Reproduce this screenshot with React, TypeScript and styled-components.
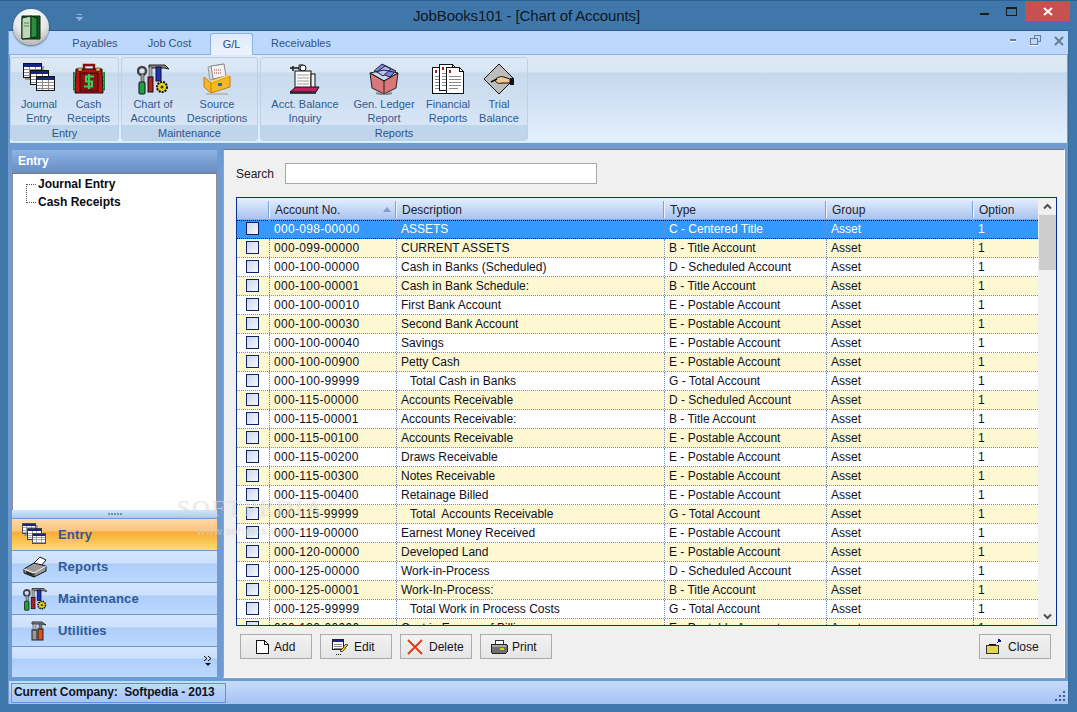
import React from "react";
import styled, { createGlobalStyle } from "styled-components";

const Global = createGlobalStyle`
  html, body { margin: 0; padding: 0; width: 1077px; height: 712px; overflow: hidden; background: #3f76a9; }
  * { box-sizing: border-box; }
  #root { width: 1077px; height: 712px; }
`;

const Win = styled.div`
  position: relative;
  width: 1077px;
  height: 712px;
  background: #3f77ab;
  border-top: 1px solid #2f5f8e;
  font-family: "Liberation Sans", Arial, sans-serif;
  font-size: 12px;
  color: #101018;
  overflow: hidden;
  display: flex;
  flex-direction: column;
  padding: 0 8px 8px 8px;
`;
const TitleBar = styled.div`
  height: 29px;
  position: relative;
  flex: none;
  display: flex;
  align-items: center;
  justify-content: center;
  padding-right: 24px;
`;
const TitleText = styled.div`
  font-size: 15px;
  letter-spacing: -0.12px;
  color: #0f1722;
  margin-top: -1px;
`;
const Orb = styled.div`
  position: absolute;
  left: 13px;
  top: 8px;
  width: 36px;
  height: 36px;
  border-radius: 50%;
  background: radial-gradient(circle at 50% 25%, #fdfdfd 0%, #e8e8e8 50%, #9a9a9a 100%);
  box-shadow: 0 1px 2px rgba(0, 0, 0, 0.55);
  z-index: 3;
  display: flex;
  align-items: center;
  justify-content: center;
`;
const QuickArrow = styled.div`
  position: absolute;
  left: 68px;
  top: 13px;
  width: 7px;
  height: 8px;
  display: flex;
  align-items: flex-end;
  justify-content: center;
`;
const Caption = styled.div`
  position: absolute;
  right: -7px;
  top: 0;
  height: 20px;
  display: flex;
  align-items: flex-start;
`;
const CapBtn = styled.div<{ $close?: boolean }>`
  width: ${(p) => (p.$close ? "45px" : "27px")};
  height: 20px;
  margin-right: ${(p) => (p.$close ? "6px" : "0")};
  background: ${(p) => (p.$close ? "#c75050" : "transparent")};
  display: flex;
  align-items: center;
  justify-content: center;
`;
const Client = styled.div`
  flex: 1;
  min-height: 0;
  display: flex;
  flex-direction: column;
  background: #6f9ad2;
  border-top: 1px solid #2f5f8e;
  border-left: 1px solid #6d9ad0;
  border-right: 1px solid #3c6ea0;
`;
const TabRow = styled.div`
  height: 24px;
  flex: none;
  position: relative;
  background: #bcd8fd;
  display: flex;
  align-items: flex-end;
  padding-left: 45px;
  border-bottom: 1px solid #8cb2e4;
`;
const Tab = styled.div<{ $active?: boolean; $w: number }>`
  width: ${(p) => p.$w}px;
  height: 22px;
  margin-bottom: -1px;
  text-align: center;
  line-height: 21px;
  font-size: 11px;
  color: #33527c;
  position: relative;
  ${(p) =>
    p.$active
      ? `margin-left: 7px; background: linear-gradient(#dfeafc, #eef3fb); border: 1px solid #8cb2e4; border-bottom: none; border-radius: 3px 3px 0 0; color:#2a4a78;`
      : ""}
`;
const MdiButtons = styled.div`
  position: absolute;
  right: 4px;
  top: 4px;
  display: flex;
  gap: 13px;
  align-items: center;
`;
const Ribbon = styled.div`
  height: 88px;
  flex: none;
  background: linear-gradient(#dfe9f5 0, #d9e6f3 17px, #c6d8ee 18px, #e4f0ff 100%);
  border-bottom: 1px solid #c5f0fb;
  padding: 2px 0 0 0;
  margin: 0 1px 0 1px;
  display: flex;
  gap: 2px;
  align-items: flex-start;
`;
const Group = styled.div<{ $w: number }>`
  width: ${(p) => p.$w}px;
  height: 84px;
  flex: none;
  border: 1px solid #bcd1e8;
  border-radius: 3px;
  display: flex;
  flex-direction: column;
  background: linear-gradient(#dde9f5 0, #d8e5f3 14px, #c8daee 15px, #dbe8f8 100%);
`;
const GroupItems = styled.div`
  flex: 1;
  display: flex;
`;
const GroupLabel = styled.div`
  height: 15px;
  background: #bed5ec;
  color: #2f5486;
  font-size: 11px;
  line-height: 16px;
  text-align: center;
  border-radius: 0 0 3px 3px;
`;
const RibbonBtn = styled.div<{ $w: number }>`
  width: ${(p) => p.$w}px;
  flex: none;
  display: flex;
  flex-direction: column;
  align-items: center;
  padding-top: 5px;
`;
const RibbonIcon = styled.div`
  height: 32px;
  display: flex;
  align-items: flex-start;
  justify-content: center;
`;
const RibbonText = styled.div`
  font-size: 11px;
  line-height: 14px;
  color: #2f5a91;
  text-align: center;
  white-space: pre;
  margin-top: 2px;
`;
const Band = styled.div`
  height: 6px;
  flex: none;
  background: #6f9ad2;
`;
const Body = styled.div`
  flex: 1;
  min-height: 0;
  display: flex;
  background: #6f9ad2;
  padding: 0 3px 3px 2px;
  gap: 5px;
`;
const Side = styled.div`
  width: 207px;
  flex: none;
  display: flex;
  flex-direction: column;
  border: 1px solid #6f9ad2;
`;
const SideHeader = styled.div`
  height: 24px;
  flex: none;
  background: linear-gradient(#8fb4e6, #7197cb 70%, #6a8fc0);
  color: #fff;
  font-weight: bold;
  font-size: 12px;
  line-height: 23px;
  padding-left: 6px;
  border-bottom: 1px solid #777;
`;
const Tree = styled.div`
  flex: 1;
  min-height: 0;
  background: #fff;
  border-left: 1px solid #909090;
  border-right: 1px solid #909090;
  padding: 3px 0 0 25px;
  position: relative;
`;
const TreeLine = styled.div`
  position: absolute;
  left: 13px;
  top: 10px;
  width: 10px;
  height: 19px;
  border-left: 1px dotted #555;
  border-bottom: 1px dotted #555;
  border-top: 1px dotted #555;
`;
const TreeItem = styled.div`
  height: 18px;
  line-height: 15px;
  font-weight: bold;
  font-size: 12px;
  color: #0a0a14;
`;
const Splitter = styled.div`
  height: 9px;
  flex: none;
  background: linear-gradient(#d3e5fd, #a9c9f5);
  border-bottom: 1px solid #6f9ad2;
  display: flex;
  align-items: center;
  justify-content: center;
  gap: 1px;
`;
const Grip = styled.span`
  width: 2px;
  height: 2px;
  background: #6f8fbc;
`;
const NavItem = styled.div<{ $active?: boolean }>`
  height: 32px;
  flex: none;
  display: flex;
  align-items: center;
  border-bottom: 1px solid #6a95cd;
  background: ${(p) =>
    p.$active
      ? "linear-gradient(#fed9a4 0, #fcc47e 12px, #f9ac36 13px, #fedc72 100%)"
      : "linear-gradient(#d6e7fe 0, #cbe0fd 12px, #aecefa 13px, #bcd8fd 100%)"};
`;
const NavIcon = styled.div`
  width: 35px;
  flex: none;
  display: flex;
  justify-content: flex-end;
`;
const NavLabel = styled.div`
  font-weight: bold;
  font-size: 13px;
  letter-spacing: 0.2px;
  color: #2f5a96;
  margin-left: 11px;
  margin-top: -1px;
`;
const NavFooter = styled.div`
  height: 30px;
  flex: none;
  display: flex;
  align-items: flex-start;
  justify-content: flex-end;
  padding: 8px 5px 0 0;
  background: linear-gradient(#d6e7fe 0, #cbe0fd 11px, #aecefa 12px, #bcd8fd 100%);
`;
const Main = styled.div`
  flex: 1;
  min-width: 0;
  background: #f0f0f0;
  border-top: 1px solid #777;
  border-left: 1px solid #a0a0a0;
  border-right: 1px solid #fff;
  border-bottom: 1px solid #fff;
  padding: 12px 7px 0 12px;
  display: flex;
  flex-direction: column;
`;
const SearchRow = styled.div`
  height: 22px;
  flex: none;
  display: flex;
  align-items: center;
  margin-bottom: 13px;
`;
const SearchLabel = styled.div`
  width: 49px;
  color: #1a1a24;
  padding-top: 2px;
`;
const SearchBox = styled.div`
  width: 312px;
  height: 21px;
  background: #fff;
  border: 1px solid #a8a8a8;
`;
const TableBox = styled.div`
  height: 429px;
  flex: none;
  border: 1px solid #0a2f8a;
  display: flex;
  background: #fff;
  overflow: hidden;
`;
const TableInner = styled.div`
  flex: 1;
  min-width: 0;
  overflow: hidden;
`;
const cols = "32px 127px 268px 162px 147px 1fr";
const HeadRow = styled.div`
  height: 22px;
  display: grid;
  grid-template-columns: ${cols};
  background: linear-gradient(#e6effe, #a9c4ef);
  border-bottom: 1px solid #8ea9d8;
  align-items: center;
`;
const HeadCell = styled.div<{ $first?: boolean }>`
  height: 17px;
  line-height: 19px;
  padding-left: 5px;
  position: relative;
  color: #1c2230;
  border-left: ${(p) => (p.$first ? "none" : "1px solid #eef4ff")};
  box-shadow: ${(p) => (p.$first ? "none" : "-1px 0 0 #7f9fd2")};
  margin-top: 2px;
`;
const SortMark = styled.span`
  position: absolute;
  right: 5px;
  top: 6px;
  width: 0;
  height: 0;
  border-left: 4px solid transparent;
  border-right: 4px solid transparent;
  border-bottom: 5px solid #7f9ccc;
`;
const Row = styled.div<{ $sel?: boolean; $alt?: boolean }>`
  height: 19px;
  display: grid;
  grid-template-columns: ${cols};
  color: ${(p) => (p.$sel ? "#fff" : "#10101c")};
  background: ${(p) => (p.$sel ? "#3399ff" : p.$alt ? "#fdf8d2" : "#fff")};
  border-bottom: ${(p) => (p.$sel ? "1px dotted #000" : "1px dotted #6f8cc8")};
  ${(p) => (p.$sel ? "border-top: 1px dotted #000; & > div { margin-top: -1px; }" : "")}
`;
const Cell = styled.div<{ $indent?: boolean; $num?: boolean }>`
  line-height: 19px;
  padding-left: ${(p) => (p.$indent ? "13px" : "4px")};
  border-left: 1px dotted #6f8cc8;
  white-space: pre;
  overflow: hidden;
  letter-spacing: ${(p) => (p.$num ? "0.32px" : "0")};
`;
const CheckCell = styled.div`
  display: flex;
  align-items: flex-start;
  justify-content: flex-start;
  padding: 2px 0 0 9px;
`;
const Check = styled.div`
  width: 13px;
  height: 13px;
  border: 1px solid #0c2461;
  background: linear-gradient(135deg, #cdd6ee, #f7f8fc);
`;
const Scroll = styled.div`
  width: 18px;
  flex: none;
  background: #f0f0f0;
  display: flex;
  flex-direction: column;
  border-left: 1px solid #f0f0f0;
`;
const ScrollBtn = styled.div`
  height: 17px;
  flex: none;
  display: flex;
  align-items: center;
  justify-content: center;
`;
const Thumb = styled.div`
  height: 55px;
  flex: none;
  background: #cdcdcd;
`;
const ScrollTrack = styled.div`
  flex: 1;
`;
const Buttons = styled.div`
  flex: 1;
  display: flex;
  gap: 8px;
  padding: 8px 6px 0 4px;
`;
const Btn = styled.div<{ $push?: boolean; $pad: number; $gap: number }>`
  width: 72px;
  height: 25px;
  border: 1px solid #ababab;
  background: linear-gradient(#f2f2f2, #e5e5e5);
  display: flex;
  align-items: center;
  padding-left: ${(p) => p.$pad}px;
  gap: ${(p) => p.$gap}px;
  color: #141420;
  ${(p) => (p.$push ? "margin-left: auto;" : "")}
`;
const Status = styled.div`
  height: 23px;
  flex: none;
  background: linear-gradient(#c6dcfc, #a4c3f2);
  display: flex;
  align-items: center;
  padding: 1px 0 0 2px;
  position: relative;
`;
const StatusPane = styled.div`
  width: 215px;
  height: 20px;
  border: 1px solid #4f97ee;
  font-weight: bold;
  font-size: 12px;
  letter-spacing: -0.1px;
  line-height: 17px;
  padding-left: 2px;
  color: #10141c;
  white-space: pre;
`;
const Grippy = styled.div`
  position: absolute;
  right: 2px;
  bottom: 2px;
  line-height: 0;
`;
const Watermark = styled.div`
  position: absolute;
  left: 177px;
  top: 494px;
  font-family: "Liberation Serif", serif;
  font-size: 24px;
  letter-spacing: 2px;
  color: rgba(255, 255, 255, 0.45);
  text-shadow: 0 0 1px rgba(140, 140, 140, 0.35);
  pointer-events: none;
  z-index: 4;
`;
const WatermarkSmall = styled.div`
  font-size: 11px;
  font-family: "Liberation Sans", sans-serif;
  letter-spacing: 0.5px;
  margin-left: 20px;
  margin-top: 3px;
  color: rgba(255, 255, 255, 0.4);
`;

const P = { shapeRendering: "crispEdges" as const };

const Sheet = ({ x, y }: { x: number; y: number }) => (
  <g transform={`translate(${x} ${y})`}>
    <rect x=".5" y=".5" width="18" height="14" fill="#fff" stroke="#111" />
    <rect x="1" y="1" width="17" height="3" fill="#1a2580" />
    <path d="M1 6.5h17M1 9.5h17M1 12.5h17M6.5 4v10M12.5 4v10" stroke="#8a8a8a" fill="none" />
  </g>
);
const JournalIcon = ({ s = 1 }: { s?: number }) => (
  <svg width={33 * s} height={32 * s} viewBox="0 0 33 32" {...P}>
    <rect x="2" y="3" width="19" height="14" fill="#999" />
    <Sheet x={0} y={0} />
    <Sheet x={7} y={7} />
    <Sheet x={13} y={13} />
  </svg>
);
const CashIcon = () => (
  <svg width="32" height="32" viewBox="0 0 32 32">
    <path d="M11 7V2h10v5" fill="none" stroke="#8a1010" strokeWidth="2.4" />
    <path d="M3 6h26l1 24H2z" fill="#b81212" stroke="#111" />
    <path d="M0 9l2 1-1 2 1 2-1 2 1 2-1 2 1 2-1 2 1 3H0zM32 9l-2 1 1 2-1 2 1 2-1 2 1 2-1 2 1 2-1 3h2z" fill="#1c9440" stroke="#062" strokeWidth=".6" />
    <rect x="5" y="5" width="4" height="3" fill="#e8c040" stroke="#111" strokeWidth=".5" />
    <rect x="23" y="5" width="4" height="3" fill="#e8c040" stroke="#111" strokeWidth=".5" />
    <rect x="7" y="10" width="18" height="18" fill="#8e1010" stroke="#3a0808" />
    <path d="M21 13.5h-8v5h6v5h-8M16 11v15" fill="none" stroke="#2fd060" strokeWidth="2.2" />
  </svg>
);
const ToolsIcon = ({ small }: { small?: boolean }) => (
  <svg width={small ? 24 : 32} height={small ? 24 : 32} viewBox="0 0 32 32">
    <circle cx="5" cy="8" r="4" fill="none" stroke="#444" strokeWidth="2.5" />
    <rect x="4" y="11" width="3" height="9" fill="#999" stroke="#222" strokeWidth=".5" />
    <rect x="2" y="19" width="6" height="12" rx="1" fill="#20a040" stroke="#111" />
    <path d="M12 2h16l4 4-5-1H12z" fill="#888" stroke="#222" />
    <rect x="12" y="4" width="3" height="10" fill="#aaa" stroke="#222" strokeWidth=".5" />
    <rect x="11" y="14" width="5" height="15" fill="#b02020" stroke="#111" />
    <rect x="19" y="4" width="5" height="14" fill="#2030c0" stroke="#111" />
    <circle cx="25" cy="24" r="5" fill="#e8d020" stroke="#111" strokeDasharray="2 1" strokeWidth="2" />
    <circle cx="25" cy="24" r="1.5" fill="#333" />
  </svg>
);
const SourceIcon = () => (
  <svg width="28" height="32" viewBox="0 0 28 32">
    <path d="M5 4l15-3 2 13-15 3z" fill="#ddd" stroke="#999" />
    <path d="M8 3l13-2 2 12-13 3z" fill="#f2f2f2" stroke="#888" />
    <path d="M11 7h8M11 10h8" stroke="#a44" strokeDasharray="1 1" />
    <path d="M1 14l7 6 19-7v11l-19 6-7-6z" fill="#f5b82a" stroke="#c87a10" />
    <path d="M8 20v10" stroke="#c87a10" />
    <path d="M8 20l19-7v-2L8 18z" fill="#ffd44a" />
    <rect x="15" y="20" width="4" height="3" fill="#2a60b0" />
    <path d="M3 31h22" stroke="#bbb" strokeWidth="2" />
  </svg>
);
const InquiryIcon = () => (
  <svg width="32" height="32" viewBox="0 0 32 32">
    <path d="M1 5h3M4 3v5M5 5h7" stroke="#111" strokeWidth="1.5" fill="none" />
    <path d="M10 2h4v5h-4z" fill="#fff" stroke="#111" />
    <circle cx="14" cy="5" r="3" fill="#fff" stroke="#111" />
    <rect x="6" y="8" width="16" height="18" fill="#fff" stroke="#111" />
    <path d="M8 12h12M8 15h12M8 18h12M8 21h12" stroke="#999" />
    <rect x="22" y="11" width="4" height="14" fill="#eee" stroke="#111" />
    <path d="M1 29l6-5h23l-3 5z" fill="#c02060" stroke="#111" />
    <path d="M1 30h26" stroke="#111" strokeWidth="1.5" />
  </svg>
);
const LedgerIcon = () => (
  <svg width="30" height="32" viewBox="0 0 30 32">
    <path d="M5 8l8-7 14 7-6 6z" fill="#7d82e8" stroke="#223" />
    <path d="M8 9l8-6 6 3-8 7z" fill="#b7c0f5" stroke="#223" />
    <path d="M1 10l14 8 14-8-2 15-12 6-12-6z" fill="#d87878" stroke="#222" />
    <path d="M15 18v13" stroke="#222" />
    <path d="M1 10l14 8 14-8-14-3z" fill="none" stroke="#222" />
    <path d="M7 30l8 2 8-2" stroke="#888" strokeWidth="2" fill="none" />
  </svg>
);
const DocPage = ({ x, y }: { x: number; y: number }) => (
  <g transform={`translate(${x} ${y})`}>
    <path d="M.5.5h13l4 4v22H.5z" fill="#fff" stroke="#111" />
    <path d="M13.5.5v4h4" fill="none" stroke="#111" />
    <path d="M3 3h2v3H3z" fill="#a02020" />
    <path d="M3 9h12M3 12h12M3 15h12M3 18h12M3 21h9" stroke="#888" />
  </g>
);
const FinIcon = () => (
  <svg width="32" height="32" viewBox="0 0 32 32" {...P}>
    <DocPage x={0} y={4} />
    <DocPage x={7} y={1} />
    <DocPage x={14} y={4} />
  </svg>
);
const TrialIcon = () => (
  <svg width="32" height="32" viewBox="0 0 32 32">
    <path d="M16 1l15 15-15 15L1 16z" fill="#bdbdbd" stroke="#111" />
    <path d="M12 17c2-3 6-4 9-3l6 2v4h-8c-3 1-6 0-7-3z" fill="#f4c492" stroke="#111" />
    <path d="M8 19l6-3" stroke="#111" strokeWidth="1.5" />
    <rect x="27" y="15" width="4" height="7" fill="#111" />
  </svg>
);
const PrinterIcon = () => (
  <svg width="24" height="22" viewBox="0 0 24 22">
    <path d="M10 8l7-7 6 3-6 7z" fill="#fff" stroke="#111" />
    <path d="M1 13l10-6 12 3v5L11 21 1 17z" fill="#9a9a9a" stroke="#111" />
    <path d="M1 13l10 4 12-7" fill="none" stroke="#f4f4f4" />
    <path d="M11 17v4" stroke="#111" />
    <path d="M3 16l7 3" stroke="#222" strokeWidth="2" />
  </svg>
);
const HammerIcon = () => (
  <svg width="16" height="20" viewBox="0 0 16 20">
    <path d="M1 1h10l4 3-4-1H1z" fill="#999" stroke="#333" />
    <rect x="2" y="3" width="3" height="6" fill="#bbb" stroke="#333" strokeWidth=".5" />
    <rect x="1" y="9" width="5" height="10" fill="#999" stroke="#222" />
    <rect x="8" y="3" width="3" height="6" fill="#777" stroke="#333" strokeWidth=".5" />
    <rect x="7" y="8" width="5" height="11" fill="#e0501c" stroke="#222" />
  </svg>
);
const AddIcon = () => (
  <svg width="13" height="14" viewBox="0 0 13 14" {...P}>
    <path d="M.5.5h8l4 4v9H.5z" fill="#fff" stroke="#111" />
    <path d="M8.5.5v4h4" fill="none" stroke="#111" />
  </svg>
);
const EditIcon = () => (
  <svg width="17" height="16" viewBox="0 0 17 16" {...P}>
    <rect x=".5" y=".5" width="11" height="10" fill="#fff" stroke="#222" />
    <rect x="1" y="1" width="10" height="2" fill="#1a2580" />
    <path d="M2 5h8M2 7h8M2 9h8" stroke="#888" />
    <path d="M8 12l6-7 2 1-6 7z" fill="#e0c820" stroke="#222" strokeWidth=".7" />
    <path d="M4 15h1M6 15h1M8 15h1" stroke="#111" />
  </svg>
);
const DeleteIcon = () => (
  <svg width="16" height="16" viewBox="0 0 16 16">
    <path d="M1 1l14 14M15 1L1 15" stroke="#dc3a10" strokeWidth="1.8" fill="none" />
  </svg>
);
const PrintBtnIcon = () => (
  <svg width="18" height="14" viewBox="0 0 18 14" {...P}>
    <path d="M5 .5h8v4H5z" fill="#fff" stroke="#333" />
    <rect x="1" y="4" width="16" height="9" rx="1" fill="#6f6f6f" stroke="#222" />
    <rect x="2" y="5" width="14" height="2" fill="#a8a8a8" />
    <rect x="10" y="8" width="4" height="2" fill="#d8d020" />
  </svg>
);
const CloseIcon = () => (
  <svg width="16" height="15" viewBox="0 0 16 15" {...P}>
    <path d="M3 7V5h6v2" fill="none" stroke="#111" />
    <rect x=".5" y="6.5" width="12" height="8" fill="#e3d84a" stroke="#333" />
    <path d="M11 4l3-3M14 1v2M14 1h-2" stroke="#10107a" strokeWidth="1.2" fill="none" />
  </svg>
);

type R = [string, string, string, boolean?];
const E = "E - Postable Account";
const B = "B - Title Account";
const D = "D - Scheduled Account";
const G = "G - Total Account";
const rows: R[] = [
  ["000-098-00000", "ASSETS", "C - Centered Title"],
  ["000-099-00000", "CURRENT ASSETS", B],
  ["000-100-00000", "Cash in Banks (Scheduled)", D],
  ["000-100-00001", "Cash in Bank Schedule:", B],
  ["000-100-00010", "First Bank Account", E],
  ["000-100-00030", "Second Bank Account", E],
  ["000-100-00040", "Savings", E],
  ["000-100-00900", "Petty Cash", E],
  ["000-100-99999", "Total Cash in Banks", G, true],
  ["000-115-00000", "Accounts Receivable", D],
  ["000-115-00001", "Accounts Receivable:", B],
  ["000-115-00100", "Accounts Receivable", E],
  ["000-115-00200", "Draws Receivable", E],
  ["000-115-00300", "Notes Receivable", E],
  ["000-115-00400", "Retainage Billed", E],
  ["000-115-99999", "Total  Accounts Receivable", G, true],
  ["000-119-00000", "Earnest Money Received", E],
  ["000-120-00000", "Developed Land", E],
  ["000-125-00000", "Work-in-Process", D],
  ["000-125-00001", "Work-In-Process:", B],
  ["000-125-99999", "Total Work in Process Costs", G, true],
  ["000-130-00000", "Cost in Excess of Billings", E],
];

const ribbon = [
  {
    label: "Entry",
    w: 109,
    items: [
      { t: "Journal\nEntry", w: 56, i: <JournalIcon /> },
      { t: "Cash\nReceipts", w: 43, i: <CashIcon /> },
    ],
  },
  {
    label: "Maintenance",
    w: 137,
    items: [
      { t: "Chart of\nAccounts", w: 62, i: <ToolsIcon /> },
      { t: "Source\nDescriptions", w: 66, i: <SourceIcon /> },
    ],
  },
  {
    label: "Reports",
    w: 268,
    items: [
      { t: "Acct. Balance\nInquiry", w: 88, i: <InquiryIcon /> },
      { t: "Gen. Ledger\nReport", w: 70, i: <LedgerIcon /> },
      { t: "Financial\nReports", w: 58, i: <FinIcon /> },
      { t: "Trial\nBalance", w: 44, i: <TrialIcon /> },
    ],
  },
];

export default function App() {
  return (
    <Win>
      <Global />
      <TitleBar>
        <TitleText>JobBooks101 - [Chart of Accounts]</TitleText>
        <QuickArrow>
          <svg width="7" height="8" viewBox="0 0 7 8" {...P}>
            <path d="M1 0h5v1H1zM0 3h7L3.5 7z" fill="#8fb2d8" />
          </svg>
        </QuickArrow>
        <Caption>
          <CapBtn>
            <svg width="9" height="3" viewBox="0 0 9 3" style={{ marginTop: 6 }}>
              <rect width="9" height="2" fill="#1a1a1a" />
            </svg>
          </CapBtn>
          <CapBtn>
            <svg width="11" height="9" viewBox="0 0 11 9" {...P}>
              <rect x=".5" y=".5" width="10" height="8" fill="none" stroke="#1a1a1a" />
              <rect width="11" height="2" fill="#1a1a1a" />
            </svg>
          </CapBtn>
          <CapBtn $close>
            <svg width="10" height="9" viewBox="0 0 10 9">
              <path d="M1 1l8 7M9 1L1 8" stroke="#fff" strokeWidth="2" />
            </svg>
          </CapBtn>
        </Caption>
      </TitleBar>
      <Orb>
        <svg width="20" height="25" viewBox="0 0 20 25">
          <path d="M1 1h18v23H1z" fill="#0f5a22" stroke="#07280f" />
          <path d="M1 3l9-2v22l-9 1z" fill="#bcd8b8" stroke="#07280f" />
          <path d="M10 1l6 2v19l-6 1z" fill="#2c8c3e" stroke="#07280f" />
          <path d="M3 8h5M3 11h5" stroke="#4a8a50" />
        </svg>
      </Orb>
      <Client>
        <TabRow>
          <Tab $w={82}>Payables</Tab>
          <Tab $w={67}>Job Cost</Tab>
          <Tab $w={43} $active>
            G/L
          </Tab>
          <Tab $w={96}>Receivables</Tab>
          <MdiButtons>
            <svg width="7" height="4" viewBox="0 0 7 4" {...P}>
              <rect width="6" height="2" fill="#6b7c94" />
              <rect y="2" width="6" height="1" fill="#fff" />
            </svg>
            <svg width="11" height="11" viewBox="0 0 11 11" {...P}>
              <rect x="4" y=".5" width="6" height="6" fill="none" stroke="#6b7c94" />
              <rect x=".5" y="3.5" width="7" height="6" fill="#bcd8fd" stroke="#6b7c94" />
              <rect y="10" width="8" height="1" fill="#fff" />
            </svg>
            <svg width="10" height="10" viewBox="0 0 10 10">
              <path d="M1 1l8 8M9 1L1 9" stroke="#6b7c94" strokeWidth="2" />
            </svg>
          </MdiButtons>
        </TabRow>
        <Ribbon>
          {ribbon.map((g) => (
            <Group key={g.label} $w={g.w}>
              <GroupItems>
                {g.items.map((b) => (
                  <RibbonBtn key={b.t} $w={b.w}>
                    <RibbonIcon>{b.i}</RibbonIcon>
                    <RibbonText>{b.t}</RibbonText>
                  </RibbonBtn>
                ))}
              </GroupItems>
              <GroupLabel>{g.label}</GroupLabel>
            </Group>
          ))}
        </Ribbon>
        <Band />
        <Body>
          <Side>
            <SideHeader>Entry</SideHeader>
            <Tree>
              <TreeLine />
              <TreeItem>Journal Entry</TreeItem>
              <TreeItem>Cash Receipts</TreeItem>
            </Tree>
            <Splitter>
              {[0, 1, 2, 3, 4].map((i) => (
                <Grip key={i} />
              ))}
            </Splitter>
            <NavItem $active>
              <NavIcon>
                <JournalIcon s={0.75} />
              </NavIcon>
              <NavLabel>Entry</NavLabel>
            </NavItem>
            <NavItem>
              <NavIcon>
                <PrinterIcon />
              </NavIcon>
              <NavLabel>Reports</NavLabel>
            </NavItem>
            <NavItem>
              <NavIcon>
                <ToolsIcon small />
              </NavIcon>
              <NavLabel>Maintenance</NavLabel>
            </NavItem>
            <NavItem>
              <NavIcon>
                <HammerIcon />
              </NavIcon>
              <NavLabel>Utilities</NavLabel>
            </NavItem>
            <NavFooter>
              <svg width="8" height="11" viewBox="0 0 8 11">
                <path d="M0 1l3 2.5L0 6M4 1l3 2.5L4 6" stroke="#111" fill="none" />
                <path d="M1 8h6l-3 3z" fill="#111" />
              </svg>
            </NavFooter>
          </Side>
          <Main>
            <SearchRow>
              <SearchLabel>Search</SearchLabel>
              <SearchBox />
            </SearchRow>
            <TableBox>
              <TableInner>
                <HeadRow>
                  <HeadCell $first />
                  <HeadCell>
                    Account No.
                    <SortMark />
                  </HeadCell>
                  <HeadCell>Description</HeadCell>
                  <HeadCell>Type</HeadCell>
                  <HeadCell>Group</HeadCell>
                  <HeadCell>Option</HeadCell>
                </HeadRow>
                {rows.map((r, i) => (
                  <Row key={r[0] + i} $sel={i === 0} $alt={i % 2 === 1}>
                    <CheckCell>
                      <Check />
                    </CheckCell>
                    <Cell $num>{r[0]}</Cell>
                    <Cell $indent={r[3]}>{r[1]}</Cell>
                    <Cell>{r[2]}</Cell>
                    <Cell>Asset</Cell>
                    <Cell>1</Cell>
                  </Row>
                ))}
              </TableInner>
              <Scroll>
                <ScrollBtn>
                  <svg width="9" height="7" viewBox="0 0 9 7">
                    <path d="M1 5.5l3.5-3.5L8 5.5" stroke="#505050" strokeWidth="2" fill="none" />
                  </svg>
                </ScrollBtn>
                <Thumb />
                <ScrollTrack />
                <ScrollBtn>
                  <svg width="9" height="7" viewBox="0 0 9 7">
                    <path d="M1 1.5L4.5 5 8 1.5" stroke="#505050" strokeWidth="2" fill="none" />
                  </svg>
                </ScrollBtn>
              </Scroll>
            </TableBox>
            <Buttons>
              <Btn $pad={15} $gap={5}>
                <AddIcon />
                Add
              </Btn>
              <Btn $pad={11} $gap={5}>
                <EditIcon />
                Edit
              </Btn>
              <Btn $pad={6} $gap={6}>
                <DeleteIcon />
                Delete
              </Btn>
              <Btn $pad={9} $gap={4}>
                <PrintBtnIcon />
                Print
              </Btn>
              <Btn $push $pad={6} $gap={6}>
                <CloseIcon />
                Close
              </Btn>
            </Buttons>
          </Main>
        </Body>
        <Status>
          <StatusPane>Current Company:  Softpedia - 2013</StatusPane>
          <Grippy>
            <svg width="12" height="12" viewBox="0 0 12 12" {...P}>
              <path d="M9 1h2v2H9zM5 5h2v2H5zM9 5h2v2H9zM1 9h2v2H1zM5 9h2v2H5zM9 9h2v2H9z" fill="#3c5f8c" />
            </svg>
          </Grippy>
        </Status>
      </Client>
      <Watermark>
        SOFTPEDIA
        <WatermarkSmall>www.softpedia.com</WatermarkSmall>
      </Watermark>
    </Win>
  );
}
